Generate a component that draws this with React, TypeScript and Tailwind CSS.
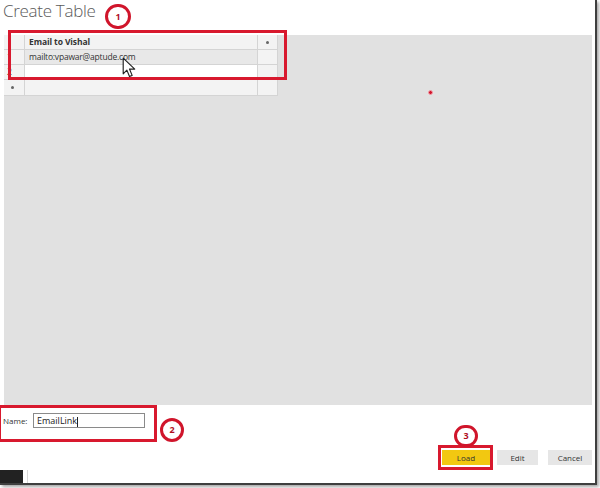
import React from 'react';

const font = { fontFamily: '"Open Sans", "Noto Sans", Arial, sans-serif' };

function Cursor() {
    return (
        <svg className="absolute left-[122px] top-[57px]" width="15" height="21" viewBox="0 0 14 20">
            <path d="M1 1 L1 16 L4.5 12.5 L7 18.5 L9.5 17.5 L7 11.5 L12 11.5 Z" fill="#fff" stroke="#222" strokeWidth="1.1" strokeLinejoin="round" />
        </svg>
    );
}

function Circle({ n, className }: { n: string; className: string }) {
    return (
        <div className={`absolute rounded-full border-[3px] border-[#d0152b] bg-white flex items-center justify-center text-[9px] font-bold text-[#b0101f] ${className}`}>
            {n}
        </div>
    );
}

function Dot() {
    return <div className="w-[3px] h-[3px] rounded-full bg-[#666]" />;
}

function Table() {
    const cell = 'border-r border-b border-[#d4d4d4]';
    return (
        <div className="w-[274px] text-[8.5px] text-[#333]">
            <div className="flex h-[15px] bg-[#f3f3f3]">
                <div className={`${cell} w-[21px]`} />
                <div className={`${cell} w-[233px] pl-[4px] font-bold leading-[14px] tracking-[-0.1px]`}>Email to Vishal</div>
                <div className={`${cell} w-[20px] flex items-center justify-center`}><Dot /></div>
            </div>
            <div className="flex h-[15px] bg-[#e8e8e8]">
                <div className={`${cell} w-[21px] pl-[3px] leading-[14px] bg-[#f3f3f3]`}>1</div>
                <div className={`${cell} w-[233px] pl-[4px] leading-[14px] tracking-[-0.2px]`}>mailto:vpawar@aptude.com</div>
                <div className={`${cell} w-[20px] bg-[#f3f3f3]`} />
            </div>
            <div className="flex h-[15px] bg-white">
                <div className={`${cell} w-[21px] pl-[3px] leading-[14px] bg-[#f3f3f3]`}>2</div>
                <div className={`${cell} w-[233px]`} />
                <div className={`${cell} w-[20px] bg-[#f3f3f3]`} />
            </div>
            <div className="flex h-[16px] bg-[#f3f3f3]">
                <div className={`${cell} w-[21px] pl-[7px] flex items-center`}><Dot /></div>
                <div className={`${cell} w-[233px]`} />
                <div className={`${cell} w-[20px]`} />
            </div>
        </div>
    );
}

export default function App() {
    return (
        <div className="relative w-[600px] h-[488px] bg-white overflow-hidden" style={font}>
            <div className="w-[597px] h-[485px] border-r-2 border-b-2 border-[#3f3f3f] shadow-[2px_2px_3px_rgba(0,0,0,0.35)] flex flex-col">
                <div className="h-[35px] pl-[3px] text-[17px] font-light text-[#5a5a5a] leading-[22px] tracking-[-0.3px]">Create Table</div>

                <div className="ml-[4px] w-[588px] h-[370px] bg-[#e1e1e1]">
                    <Table />
                </div>

                <div className="mt-[8px] h-[15px] flex items-center pl-[3px] text-[8px] text-[#333]">
                    <span className="w-[30px]">Name:</span>
                    <div className="w-[112px] h-[15px] border border-[#8a8a8a] bg-white pl-[3px] text-[9px] leading-[13px] text-[#222]">
                        EmailLink<span className="inline-block w-px h-[10px] bg-[#222] align-middle" />
                    </div>
                </div>

                <div className="mt-[22px] h-[15px] flex justify-end pr-[3px] text-[8px] text-[#333]">
                    <div className="w-[48px] bg-[#f2c811] flex items-center justify-center">Load</div>
                    <div className="ml-[7px] w-[41px] bg-[#e6e6e6] flex items-center justify-center">Edit</div>
                    <div className="ml-[10px] w-[44px] bg-[#e6e6e6] flex items-center justify-center">Cancel</div>
                </div>

                <div className="mt-[5px] flex">
                    <div className="w-[23px] h-[13px] bg-[#222]" />
                    <div className="ml-[4px] w-px h-[13px] bg-[#d8d8d8]" />
                </div>
            </div>

            <div className="absolute left-[428px] top-[90px] w-[5px] h-[5px] rounded-full bg-[#d0152b] border border-[#f3a0aa]" />

            <Cursor />

            <div className="absolute left-[8px] top-[30px] w-[279px] h-[50px] border-[3px] border-[#d8192e]" />
            <Circle n="1" className="left-[105px] top-[4px] w-[26px] h-[25px]" />

            <div className="absolute left-[-2px] top-[405px] w-[159px] h-[37px] border-[3px] border-[#d8192e]" />
            <Circle n="2" className="left-[160px] top-[418px] w-[24px] h-[24px]" />

            <div className="absolute left-[438px] top-[445px] w-[55px] h-[25px] border-[3px] border-[#d8192e]" />
            <Circle n="3" className="left-[454px] top-[425px] w-[24px] h-[22px]" />
        </div>
    );
}
